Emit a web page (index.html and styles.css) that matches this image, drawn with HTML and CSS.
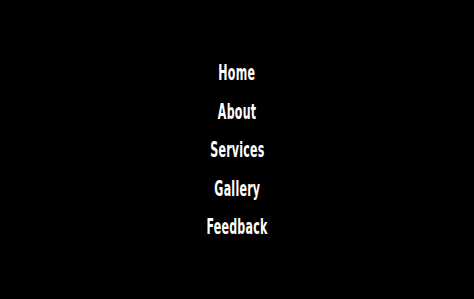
FILE: index.html
```html
<!DOCTYPE html>
<html>
<head>
<meta charset="utf-8">
<link rel="stylesheet" href="styles.css">
</head>
<body>
<nav class="menu">
  <a class="item" href="#">Home</a>
  <a class="item" href="#">About</a>
  <a class="item" href="#">Services</a>
  <a class="item" href="#">Gallery</a>
  <a class="item" href="#">Feedback</a>
</nav>
</body>
</html>
```
FILE: styles.css
```css
html, body {
  margin: 0;
  height: 100%;
  background: #000;
}
.menu {
  height: 100%;
  box-sizing: border-box;
  padding-top: 2px;
  display: flex;
  flex-direction: column;
  align-items: center;
  justify-content: center;
}
.item {
  display: block;
  color: #fff;
  text-decoration: none;
  font-family: "DejaVu Sans Condensed", "DejaVu Sans", sans-serif;
  font-stretch: condensed;
  font-weight: bold;
  font-size: 20.5px;
  line-height: 38.5px;
  height: 38.5px;
  letter-spacing: 0.4px;
  transform: scaleX(0.6);
}
```
